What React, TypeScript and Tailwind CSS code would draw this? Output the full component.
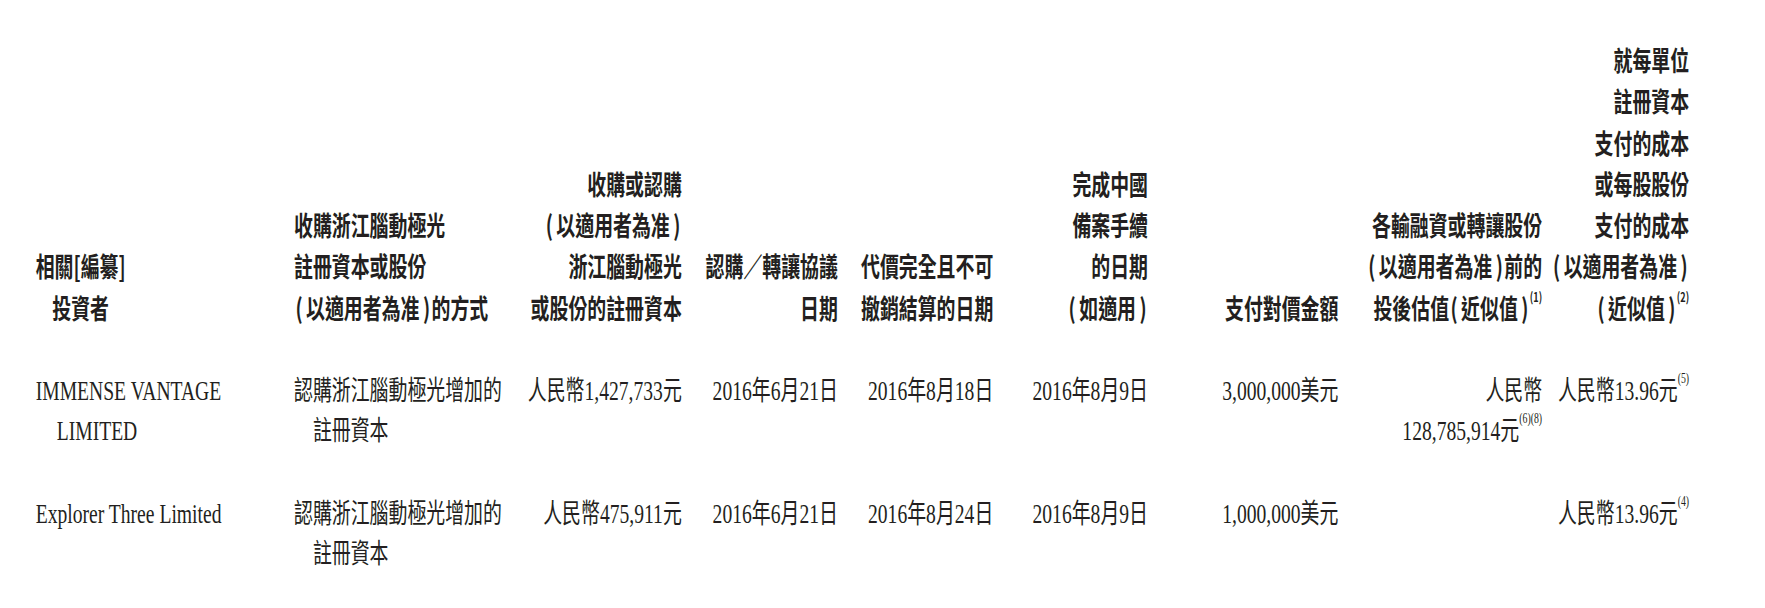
import React from "react";

const cols =
  "grid grid-cols-[369px_320px_234px_223px_222px_221px_272px_291px_210px]";

const Lp = () => <span className="pl-[2px] pr-[5px]">(</span>;
const Rp = () => <span className="pl-[5px] pr-[2px]">)</span>;

const N = ({ children }: { children: React.ReactNode }) => (
  <span className="text-[28px]">{children}</span>
);

const HSup = ({ children }: { children: React.ReactNode }) => (
  <sup className="align-super text-[13px] leading-none font-bold">{children}</sup>
);
const BSup = ({ children }: { children: React.ReactNode }) => (
  <sup className="align-super text-[14px] leading-none">{children}</sup>
);

export default function App() {
  return (
    <div className="w-[1765px] h-[608px] overflow-hidden bg-white text-[#231f20]">
      <div className="w-[2521px] origin-top-left scale-x-[0.7] pt-[39px] pl-[51px]">
        {/* Header */}
        <div
          className={`${cols} items-end font-['Noto_Sans_CJK_TC','Noto_Sans_CJK_SC',sans-serif] font-bold text-[27px] leading-[41.3px]`}
        >
          <div>
            <div className="inline-block text-center">
              相關[編纂]
              <br />
              投資者
            </div>
          </div>
          <div className="text-left">
            收購浙江腦動極光
            <br />
            註冊資本或股份
            <br />
            <Lp />以適用者為准<Rp />的方式
          </div>
          <div className="text-right">
            收購或認購
            <br />
            <Lp />以適用者為准<Rp />
            <br />
            浙江腦動極光
            <br />
            或股份的註冊資本
          </div>
          <div className="text-right">
            認購／轉讓協議
            <br />
            日期
          </div>
          <div className="text-right">
            代價完全且不可
            <br />
            撤銷結算的日期
          </div>
          <div className="text-right">
            完成中國
            <br />
            備案手續
            <br />
            的日期
            <br />
            <Lp />如適用<Rp />
          </div>
          <div className="text-right">支付對價金額</div>
          <div className="text-right">
            各輸融資或轉讓股份
            <br />
            <Lp />以適用者為准<Rp />前的
            <br />
            投後估值<Lp />近似值<Rp />
            <HSup>(1)</HSup>
          </div>
          <div className="text-right">
            就每單位
            <br />
            註冊資本
            <br />
            支付的成本
            <br />
            或每股股份
            <br />
            支付的成本
            <br />
            <Lp />以適用者為准<Rp />
            <br />
            <Lp />近似值<Rp />
            <HSup>(2)</HSup>
          </div>
        </div>

        {/* Row 1 */}
        <div
          className={`${cols} items-start mt-[43px] font-['Liberation_Serif','Noto_Sans_CJK_TC','Noto_Sans_CJK_SC',serif] text-[27px] leading-[40px]`}
        >
          <div className="pl-[30px] -indent-[30px]">
            <N>IMMENSE VANTAGE</N>
            <br />
            <N>LIMITED</N>
          </div>
          <div className="pl-[27px] -indent-[27px]">
            認購浙江腦動極光增加的
            <br />
            註冊資本
          </div>
          <div className="text-right">
            人民幣<N>1,427,733</N>元
          </div>
          <div className="text-right">
            <N>2016</N>年<N>6</N>月<N>21</N>日
          </div>
          <div className="text-right">
            <N>2016</N>年<N>8</N>月<N>18</N>日
          </div>
          <div className="text-right">
            <N>2016</N>年<N>8</N>月<N>9</N>日
          </div>
          <div className="text-right">
            <N>3,000,000</N>美元
          </div>
          <div className="text-right">
            人民幣
            <br />
            <N>128,785,914</N>元<BSup>(6)(8)</BSup>
          </div>
          <div className="text-right">
            人民幣<N>13.96</N>元<BSup>(5)</BSup>
          </div>
        </div>

        {/* Row 2 */}
        <div
          className={`${cols} items-start mt-[43px] font-['Liberation_Serif','Noto_Sans_CJK_TC','Noto_Sans_CJK_SC',serif] text-[27px] leading-[40px]`}
        >
          <div>
            <N>Explorer Three Limited</N>
          </div>
          <div className="pl-[27px] -indent-[27px]">
            認購浙江腦動極光增加的
            <br />
            註冊資本
          </div>
          <div className="text-right">
            人民幣<N>475,911</N>元
          </div>
          <div className="text-right">
            <N>2016</N>年<N>6</N>月<N>21</N>日
          </div>
          <div className="text-right">
            <N>2016</N>年<N>8</N>月<N>24</N>日
          </div>
          <div className="text-right">
            <N>2016</N>年<N>8</N>月<N>9</N>日
          </div>
          <div className="text-right">
            <N>1,000,000</N>美元
          </div>
          <div className="text-right"></div>
          <div className="text-right">
            人民幣<N>13.96</N>元<BSup>(4)</BSup>
          </div>
        </div>
      </div>
    </div>
  );
}
